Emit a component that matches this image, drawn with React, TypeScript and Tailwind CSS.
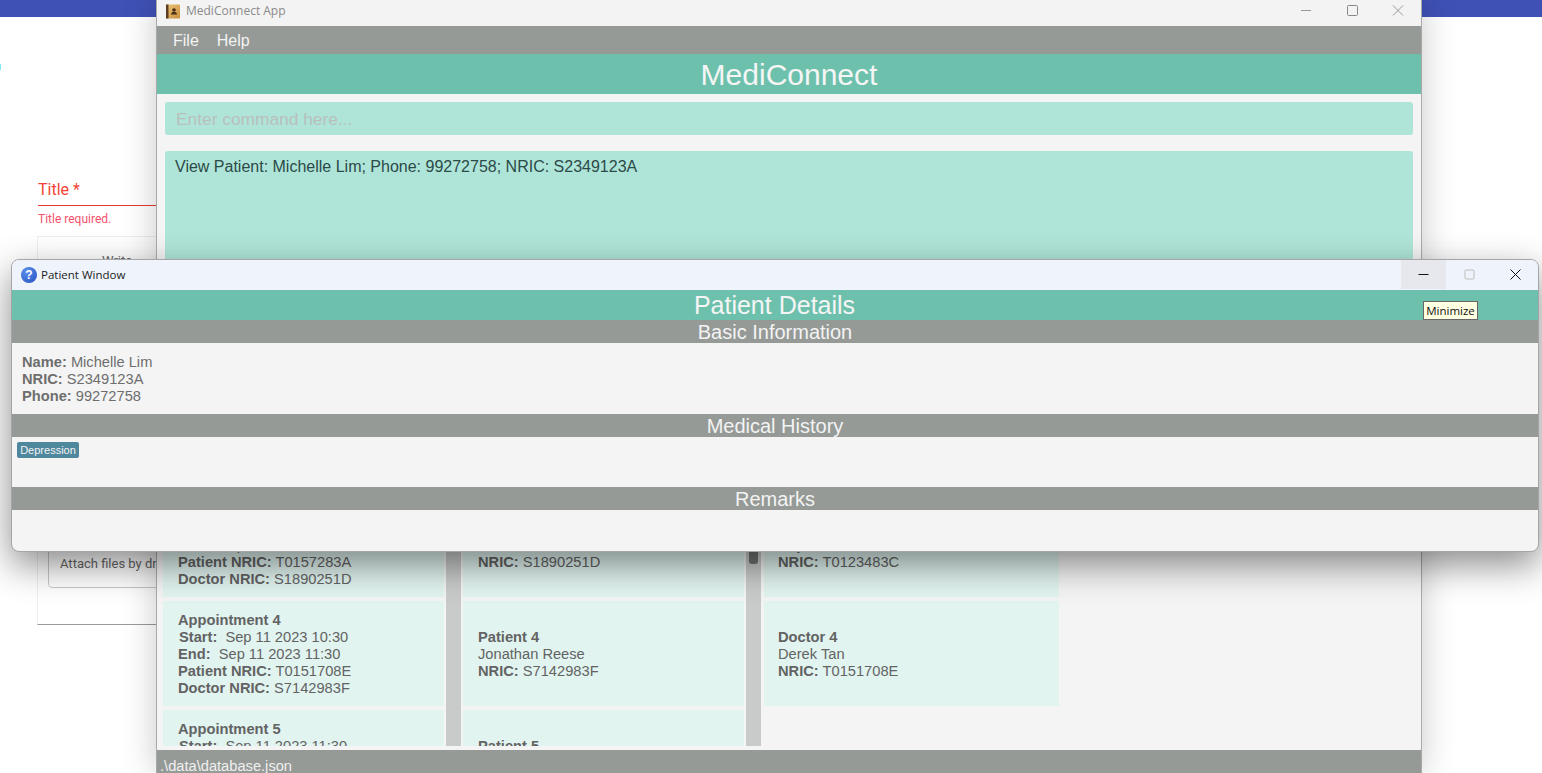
import React from "react";

const sans = "font-['Liberation_Sans',Arial,sans-serif]";

function Row({ b, v, className = "" }: { b: string; v: string; className?: string }) {
  return (
    <div className={className}>
      <span className="font-bold">{b}</span> {v}
    </div>
  );
}

function Card({ className = "", children }: { className?: string; children: React.ReactNode }) {
  return (
    <div className={`h-[105px] shrink-0 bg-[#e1f4f0] flex flex-col justify-center pt-[2px] text-[14.67px] leading-[17px] text-[#636363] ${className}`}>
      {children}
    </div>
  );
}

function Appt({ n, s, e, p, d }: { n: number; s: string; e: string; p: string; d: string }) {
  return (
    <Card className="pl-[15px]">
      <div className="font-bold">Appointment {n}</div>
      <div className="pl-px"><span className="font-bold">Start:</span>&nbsp;&nbsp;{s}</div>
      <div><span className="font-bold">End:</span>&nbsp;&nbsp;{e}</div>
      <Row b="Patient NRIC:" v={p} />
      <Row b="Doctor NRIC:" v={d} />
    </Card>
  );
}

function Person({ t, n, nric, k, className = "pl-[15px]" }: { t: string; n: string; nric: string; k: number; className?: string }) {
  return (
    <Card className={className}>
      <div className="font-bold">{t} {k}</div>
      <div>{n}</div>
      <Row b="NRIC:" v={nric} />
    </Card>
  );
}

function Scroll({ thumb = false }: { thumb?: boolean }) {
  return (
    <div className="relative w-[15px] shrink-0 bg-[#c9caca] mx-[2px]">
      {thumb && <div className="absolute top-[276px] left-[3px] w-[9px] h-[14px] rounded-b-[3px] bg-[#6f7372]" />}
    </div>
  );
}

function Bar({ children }: { children: string }) {
  return (
    <div className="h-[23px] shrink-0 bg-[#959a97] text-center text-[20px] leading-[24px] text-[#f3f3f3]">{children}</div>
  );
}

export default function App() {
  return (
    <div className={`relative h-[773px] w-[1542px] overflow-hidden bg-white ${sans}`}>
      <div className="h-[17px] bg-[#3f51b5]" />
      <div className="absolute left-0 top-[64px] h-[6px] w-px bg-[#7fe8f5]" />

      {/* Page behind the windows */}
      <div className="absolute left-[38px] top-[180px] w-[200px] font-['Roboto',sans-serif]">
        <div className="h-[26px] border-b border-[#e53935] text-[16px] leading-[19px] text-[#f44336]">Title *</div>
        <div className="mt-[6px] text-[12px] leading-[14px] text-[#f4516c]">Title required.</div>
      </div>
      <div className="absolute left-[37px] top-[236px] h-[389px] w-[181px] border border-[#eeeeee] border-b-[#9a9a9a] font-['Roboto',sans-serif] bg-white">
        <div className="pl-[64px] pt-[16px] text-[13px] leading-[16px] text-[#666666]">Write</div>
        <div className="absolute left-[10px] top-[280px] h-[71px] w-[170px] rounded-b-[4px] border border-[#c8c8c8] pl-[11px] pt-[38px] text-[13px] leading-[15px] text-[#666666] whitespace-nowrap">
          Attach files by dragging
        </div>
      </div>

      {/* MediConnect main window */}
      <div className="absolute left-[156px] top-0 flex h-[773px] w-[1266px] flex-col border-x border-[#a9a9a9] bg-[#f4f4f4] shadow-[0_0_32px_rgba(0,0,0,0.22)]">
        <div className="flex h-[26px] shrink-0 items-center bg-[#f3f3f3] pb-[4px]">
          <svg width="15" height="15" viewBox="0 0 15 15" className="ml-[9px]">
            <defs>
              <linearGradient id="book" x1="0" y1="0" x2="1" y2="1">
                <stop offset="0" stopColor="#ecc47a" />
                <stop offset="1" stopColor="#c98f3c" />
              </linearGradient>
            </defs>
            <rect x="0" y="0.5" width="14" height="14" rx="1" fill="url(#book)" />
            <rect x="0" y="0.5" width="2.5" height="14" fill="#5b3d22" />
            <circle cx="8" cy="6" r="1.8" fill="#4a2f18" />
            <path d="M5 10.5 H11 V9.5 L9.5 8 H6.5 L5 9.5 Z" fill="#4a2f18" />
          </svg>
          <span className="ml-[5px] font-['Open_Sans',sans-serif] text-[12px] text-[#8a8a8a]">MediConnect App</span>
          <div className="ml-auto flex items-center text-[#8f8f8f]">
            <svg width="46" height="14" viewBox="0 0 46 14"><path d="M18 6.5H28" stroke="#999" /></svg>
            <svg width="46" height="14" viewBox="0 0 46 14"><rect x="18.5" y="1.5" width="10" height="10" rx="1" fill="none" stroke="#888" /></svg>
            <svg width="46" height="14" viewBox="0 0 46 14"><path d="M18 1.5L28 11.5M28 1.5L18 11.5" stroke="#999" /></svg>
          </div>
        </div>
        <div className="flex h-[28px] shrink-0 items-center gap-[18px] bg-[#959a97] pl-[16px] pt-[2px] text-[16px] text-[#f3f3f3]">
          <span>File</span>
          <span>Help</span>
        </div>
        <div className="h-[40px] shrink-0 bg-[#6dc1ac] text-center text-[30px] leading-[41px] text-[#f5f5f5]">MediConnect</div>
        <div className="mx-[8px] mt-[8px] flex h-[33px] shrink-0 items-center rounded-[3px] bg-[#afe5d8] pl-[11px] pt-[2px] text-[17.33px] text-[#b9bfbd]">
          Enter command here...
        </div>
        <div className="mx-[8px] mt-[16px] h-[110px] shrink-0 rounded-[3px] bg-[#afe5d8] pl-[10px] pt-[6px] text-[16px] leading-[19px] text-[#2b4a48]">
          View Patient: Michelle Lim; Phone: 99272758; NRIC: S2349123A
        </div>
        <div className="ml-[6px] mt-[13px] flex h-[472px] shrink-0 overflow-hidden">
          <div className="flex w-[281px] shrink-0 flex-col gap-[4px]">
            <Appt n={1} s="Sep 11 2023 07:30" e="Sep 11 2023 08:30" p="T0123483C" d="S2349123A" />
            <Appt n={2} s="Sep 11 2023 08:30" e="Sep 11 2023 09:30" p="T0123483C" d="S2349123A" />
            <Appt n={3} s="Sep 11 2023 09:30" e="Sep 11 2023 10:30" p="T0157283A" d="S1890251D" />
            <Appt n={4} s="Sep 11 2023 10:30" e="Sep 11 2023 11:30" p="T0151708E" d="S7142983F" />
            <Appt n={5} s="Sep 11 2023 11:30" e="Sep 11 2023 12:30" p="T0151708E" d="S7142983F" />
          </div>
          <Scroll />
          <div className="flex w-[281px] shrink-0 flex-col gap-[4px]">
            <Person t="Patient" k={1} n="Michelle Lim" nric="S2349123A" />
            <Person t="Patient" k={2} n="Alex Yeoh" nric="T0123483C" />
            <Person t="Patient" k={3} n="Bernice Yu" nric="S1890251D" />
            <Person t="Patient" k={4} n="Jonathan Reese" nric="S7142983F" />
            <Person t="Patient" k={5} n="Irfan Ibrahim" nric="T0151708E" />
          </div>
          <Scroll thumb />
          <div className="ml-px flex w-[295px] shrink-0 flex-col gap-[4px]">
            <Person className="pl-[14px]" t="Doctor" k={1} n="John Doe" nric="S2349123A" />
            <Person className="pl-[14px]" t="Doctor" k={2} n="Jane Ong" nric="S1890251D" />
            <Person className="pl-[14px]" t="Doctor" k={3} n="Roy Lee" nric="T0123483C" />
            <Person className="pl-[14px]" t="Doctor" k={4} n="Derek Tan" nric="T0151708E" />
          </div>
        </div>
        <div className="mt-auto h-[23px] shrink-0 overflow-hidden bg-[#959a97] pl-[3px] text-[14.67px] leading-[33px] text-[#f0f0f0]">.\data\database.json</div>
      </div>

      {/* Patient window */}
      <div className="absolute left-[11px] top-[259px] flex h-[293px] w-[1528px] flex-col overflow-hidden rounded-[8px] border border-[#a5a5a5] bg-[#f4f4f4] shadow-[0_13px_36px_rgba(0,0,0,0.46)]">
        <div className="flex h-[30px] shrink-0 items-center bg-[#eff3fb]">
          <div className="ml-[9px] flex h-[16px] w-[16px] items-center justify-center rounded-full bg-[radial-gradient(circle_at_35%_30%,#5f90ec,#1f4fc0)] text-[12px] font-bold leading-none text-white">?</div>
          <span className="ml-[4px] font-['Open_Sans',sans-serif] text-[11.5px] text-[#1c1c1c]">Patient Window</span>
          <div className="ml-auto flex h-[30px]">
            <div className="flex h-[29px] w-[45px] items-center justify-center bg-[#e6e8ee]">
              <svg width="11" height="11" viewBox="0 0 11 11"><path d="M0.5 5.5H10.5" stroke="#111" /></svg>
            </div>
            <div className="flex h-[29px] w-[46px] items-center justify-center">
              <svg width="11" height="11" viewBox="0 0 11 11"><rect x="1" y="1" width="9" height="9" rx="1" fill="none" stroke="#bdbdbd" /></svg>
            </div>
            <div className="flex h-[29px] w-[46px] items-center justify-center">
              <svg width="11" height="11" viewBox="0 0 11 11"><path d="M0.5 0.5L10.5 10.5M10.5 0.5L0.5 10.5" stroke="#111" /></svg>
            </div>
          </div>
        </div>
        <div className="h-[30px] shrink-0 bg-[#6dc1ac] pr-[1px] text-center text-[25px] leading-[31px] text-[#f5f5f5]">Patient Details</div>
        <Bar>Basic Information</Bar>
        <div className="h-[71px] shrink-0 pl-[10px] pt-[11px] text-[14.67px] leading-[17px] text-[#6e6e6e]">
          <Row b="Name:" v="Michelle Lim" />
          <Row b="NRIC:" v="S2349123A" />
          <Row b="Phone:" v="99272758" />
        </div>
        <Bar>Medical History</Bar>
        <div className="h-[50px] shrink-0 pl-[5px] pt-[5px]">
          <div className="h-[16px] w-[62px] rounded-[2px] bg-[#4f879d] text-center text-[11px] leading-[16px] text-[#f3f3f3]">Depression</div>
        </div>
        <Bar>Remarks</Bar>
        <div className="flex-1" />
      </div>

      {/* Tooltip */}
      <div className="absolute left-[1423px] top-[301px] flex h-[19px] w-[55px] items-center justify-center border border-[#666666] bg-[#ffffe1] font-['Open_Sans',sans-serif] text-[11.5px] text-[#111111]">
        Minimize
      </div>
    </div>
  );
}
